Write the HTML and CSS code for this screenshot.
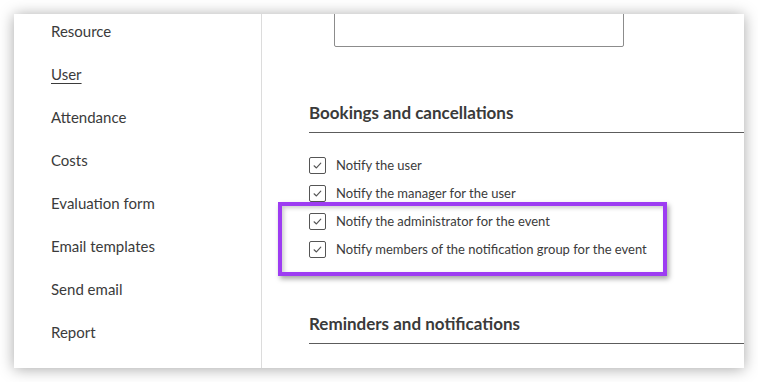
FILE: index.html
```html
<!DOCTYPE html>
<html lang="en">
<head>
    <meta charset="UTF-8">
    <meta name="viewport" content="width=device-width, initial-scale=1.0">
    <title>Notifications settings</title>
    <link rel="stylesheet" href="styles.css">
</head>
<body>
    <div class="card">
        <div class="sidebar">
            <ul class="nav">
                <li>Resource</li>
                <li class="active">User</li>
                <li>Attendance</li>
                <li>Costs</li>
                <li>Evaluation form</li>
                <li>Email templates</li>
                <li>Send email</li>
                <li>Report</li>
            </ul>
        </div>

        <div class="main">
            <div class="text-box"></div>

            <h2 class="section-title first">Bookings and cancellations</h2>

            <div class="options">
                <label class="option">
                    <span class="checkbox">
                        <svg width="17" height="17" viewBox="0 0 17 17"><path d="M4.6 8.8 L7.3 11.3 L12.2 5.9" /></svg>
                    </span>
                    Notify the user
                </label>
                <label class="option">
                    <span class="checkbox">
                        <svg width="17" height="17" viewBox="0 0 17 17"><path d="M4.6 8.8 L7.3 11.3 L12.2 5.9" /></svg>
                    </span>
                    Notify the manager for the user
                </label>
                <label class="option">
                    <span class="checkbox">
                        <svg width="17" height="17" viewBox="0 0 17 17"><path d="M4.6 8.8 L7.3 11.3 L12.2 5.9" /></svg>
                    </span>
                    Notify the administrator for the event
                </label>
                <label class="option">
                    <span class="checkbox">
                        <svg width="17" height="17" viewBox="0 0 17 17"><path d="M4.6 8.8 L7.3 11.3 L12.2 5.9" /></svg>
                    </span>
                    Notify members of the notification group for the event
                </label>
            </div>

            <h2 class="section-title second">Reminders and notifications</h2>

            <div class="highlight"></div>
        </div>
    </div>
</body>
</html>
```

FILE: styles.css
```css
* {
    margin: 0;
    padding: 0;
    box-sizing: border-box;
}

body {
    font-family: Lato, 'Open Sans', sans-serif;
    background: #ffffff;
    color: #333;
    padding: 14px;
}

.card {
    width: 730px;
    height: 354px;
    background: #fff;
    display: flex;
    overflow: hidden;
    box-shadow: 0 1px 14px rgba(0,0,0,0.35);
}

.sidebar {
    width: 248px;
    border-right: 1px solid #dcdcdc;
    flex-shrink: 0;
}

.nav {
    list-style: none;
    margin-top: -4px;
    padding-left: 37px;
}

.nav li {
    height: 43px;
    line-height: 43px;
    font-size: 15px;
    color: #3b3b3b;
}

.nav li.active {
    text-decoration: underline;
    text-underline-offset: 3px;
}

.main {
    flex: 1;
    position: relative;
    padding-left: 47px;
}

.text-box {
    width: 290px;
    height: 40px;
    margin-top: -7px;
    margin-left: 25px;
    border: 1px solid #8c8c8c;
    border-radius: 2px;
}

.section-title {
    font-size: 17px;
    font-weight: 700;
    line-height: 24px;
    color: #3a3a3a;
    padding-bottom: 7px;
    border-bottom: 1px solid #5c5c5c;
}

.section-title.first {
    margin-top: 54px;
}

.section-title.second {
    margin-top: 49px;
}

.options {
    margin-top: 18px;
}

.option {
    height: 28px;
    display: flex;
    align-items: center;
    gap: 10px;
    font-size: 13px;
    color: #3b3b3b;
}

.checkbox {
    width: 17px;
    height: 17px;
    border: 1px solid #555;
    border-radius: 2px;
    display: flex;
    align-items: center;
    justify-content: center;
}

.checkbox svg {
    fill: none;
    stroke: #555;
    stroke-width: 1.3;
    stroke-linecap: round;
    stroke-linejoin: round;
}

.highlight {
    position: absolute;
    left: 16px;
    top: 188px;
    width: 389px;
    height: 74px;
    border: 4px solid #9d3cf2;
    box-shadow: 2px 3px 5px rgba(0,0,0,0.35), inset 2px 2px 4px rgba(0,0,0,0.2);
}
```
